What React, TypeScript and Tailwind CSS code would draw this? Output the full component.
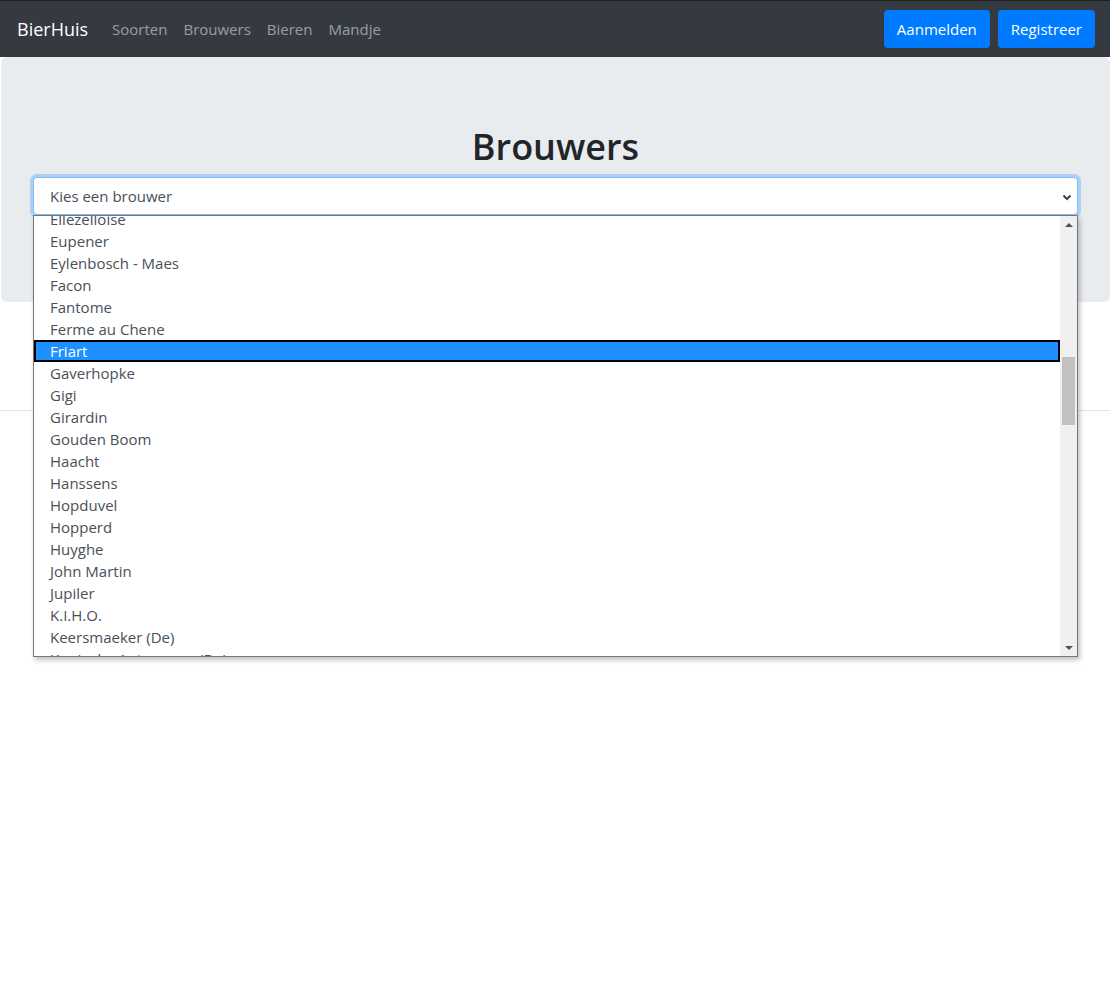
const brouwers = [
  'Ellezelloise',
  'Eupener',
  'Eylenbosch - Maes',
  'Facon',
  'Fantome',
  'Ferme au Chene',
  'Friart',
  'Gaverhopke',
  'Gigi',
  'Girardin',
  'Gouden Boom',
  'Haacht',
  'Hanssens',
  'Hopduvel',
  'Hopperd',
  'Huyghe',
  'John Martin',
  'Jupiler',
  'K.I.H.O.',
  'Keersmaeker (De)',
  'Koninck - Antwerpen (De)',
]

function Navbar() {
  return (
    <nav className="h-[57px] border-t border-[#1d2124] bg-[#343a40] flex items-center justify-between pl-[17px] pr-[15px]">
      <div className="flex items-center">
        <span className="text-white text-[18px] mr-[24px]">BierHuis</span>
        <div className="flex gap-[16px] text-[15px] text-white/50">
          <span>Soorten</span>
          <span>Brouwers</span>
          <span>Bieren</span>
          <span>Mandje</span>
        </div>
      </div>
      <div className="flex gap-2">
        <button className="h-[38px] px-[13px] rounded bg-[#007bff] text-white text-[15px]">Aanmelden</button>
        <button className="h-[38px] px-[13px] rounded bg-[#007bff] text-white text-[15px]">Registreer</button>
      </div>
    </nav>
  )
}

function Dropdown() {
  return (
    <div className="absolute left-0 right-0 top-full h-[442px] border border-[#767676] bg-white shadow-[2px_3px_5px_rgba(0,0,0,0.25)] flex overflow-hidden text-[15px]">
      <ul className="flex-1 -mt-[8px]">
        {brouwers.map(b => (
          <li
            key={b}
            className={
              b === 'Friart'
                ? 'h-[22px] leading-[18px] pl-[14px] bg-[#1e90ff] text-white border-2 border-black'
                : 'h-[22px] leading-[22px] pl-[16px] text-[#495057]'
            }
          >
            {b}
          </li>
        ))}
      </ul>
      <div className="w-[17px] bg-[#f0f0f0] flex flex-col">
        <div className="h-[17px] flex items-center justify-center">
          <div className="w-0 h-0 border-x-[4px] border-x-transparent border-b-[4px] border-b-[#505050]" />
        </div>
        <div className="flex-1">
          <div className="mt-[124px] mx-[2px] h-[68px] bg-[#c1c1c1]" />
        </div>
        <div className="h-[17px] flex items-center justify-center">
          <div className="w-0 h-0 border-x-[4px] border-x-transparent border-t-[4px] border-t-[#505050]" />
        </div>
      </div>
    </div>
  )
}

export default function App() {
  return (
    <div className="min-h-screen bg-white text-[#212529] font-['Open_Sans',sans-serif]">
      <Navbar />
      <div className="pl-px">
        <div className="bg-[#e9ecef] rounded-md px-8 pt-16 pb-[87px]">
          <h1 className="text-center text-[36px] font-semibold leading-[52px] mb-[4px]">Brouwers</h1>
          <div className="relative">
            <div className="h-[38px] bg-white border border-[#80bdff] rounded shadow-[0_0_0_3px_rgba(0,123,255,0.25)] flex items-center justify-between pl-[16px] pr-[5px] pt-px text-[15px] text-[#495057]">
              <span>Kies een brouwer</span>
              <svg width="10" height="10" viewBox="0 0 10 10">
                <path d="M1.5 3.5l3.5 3.5 3.5-3.5" fill="none" stroke="#444" strokeWidth="2" />
              </svg>
            </div>
            <Dropdown />
          </div>
        </div>
      </div>
      <hr className="mt-[108px] border-t border-black/10" />
    </div>
  )
}
